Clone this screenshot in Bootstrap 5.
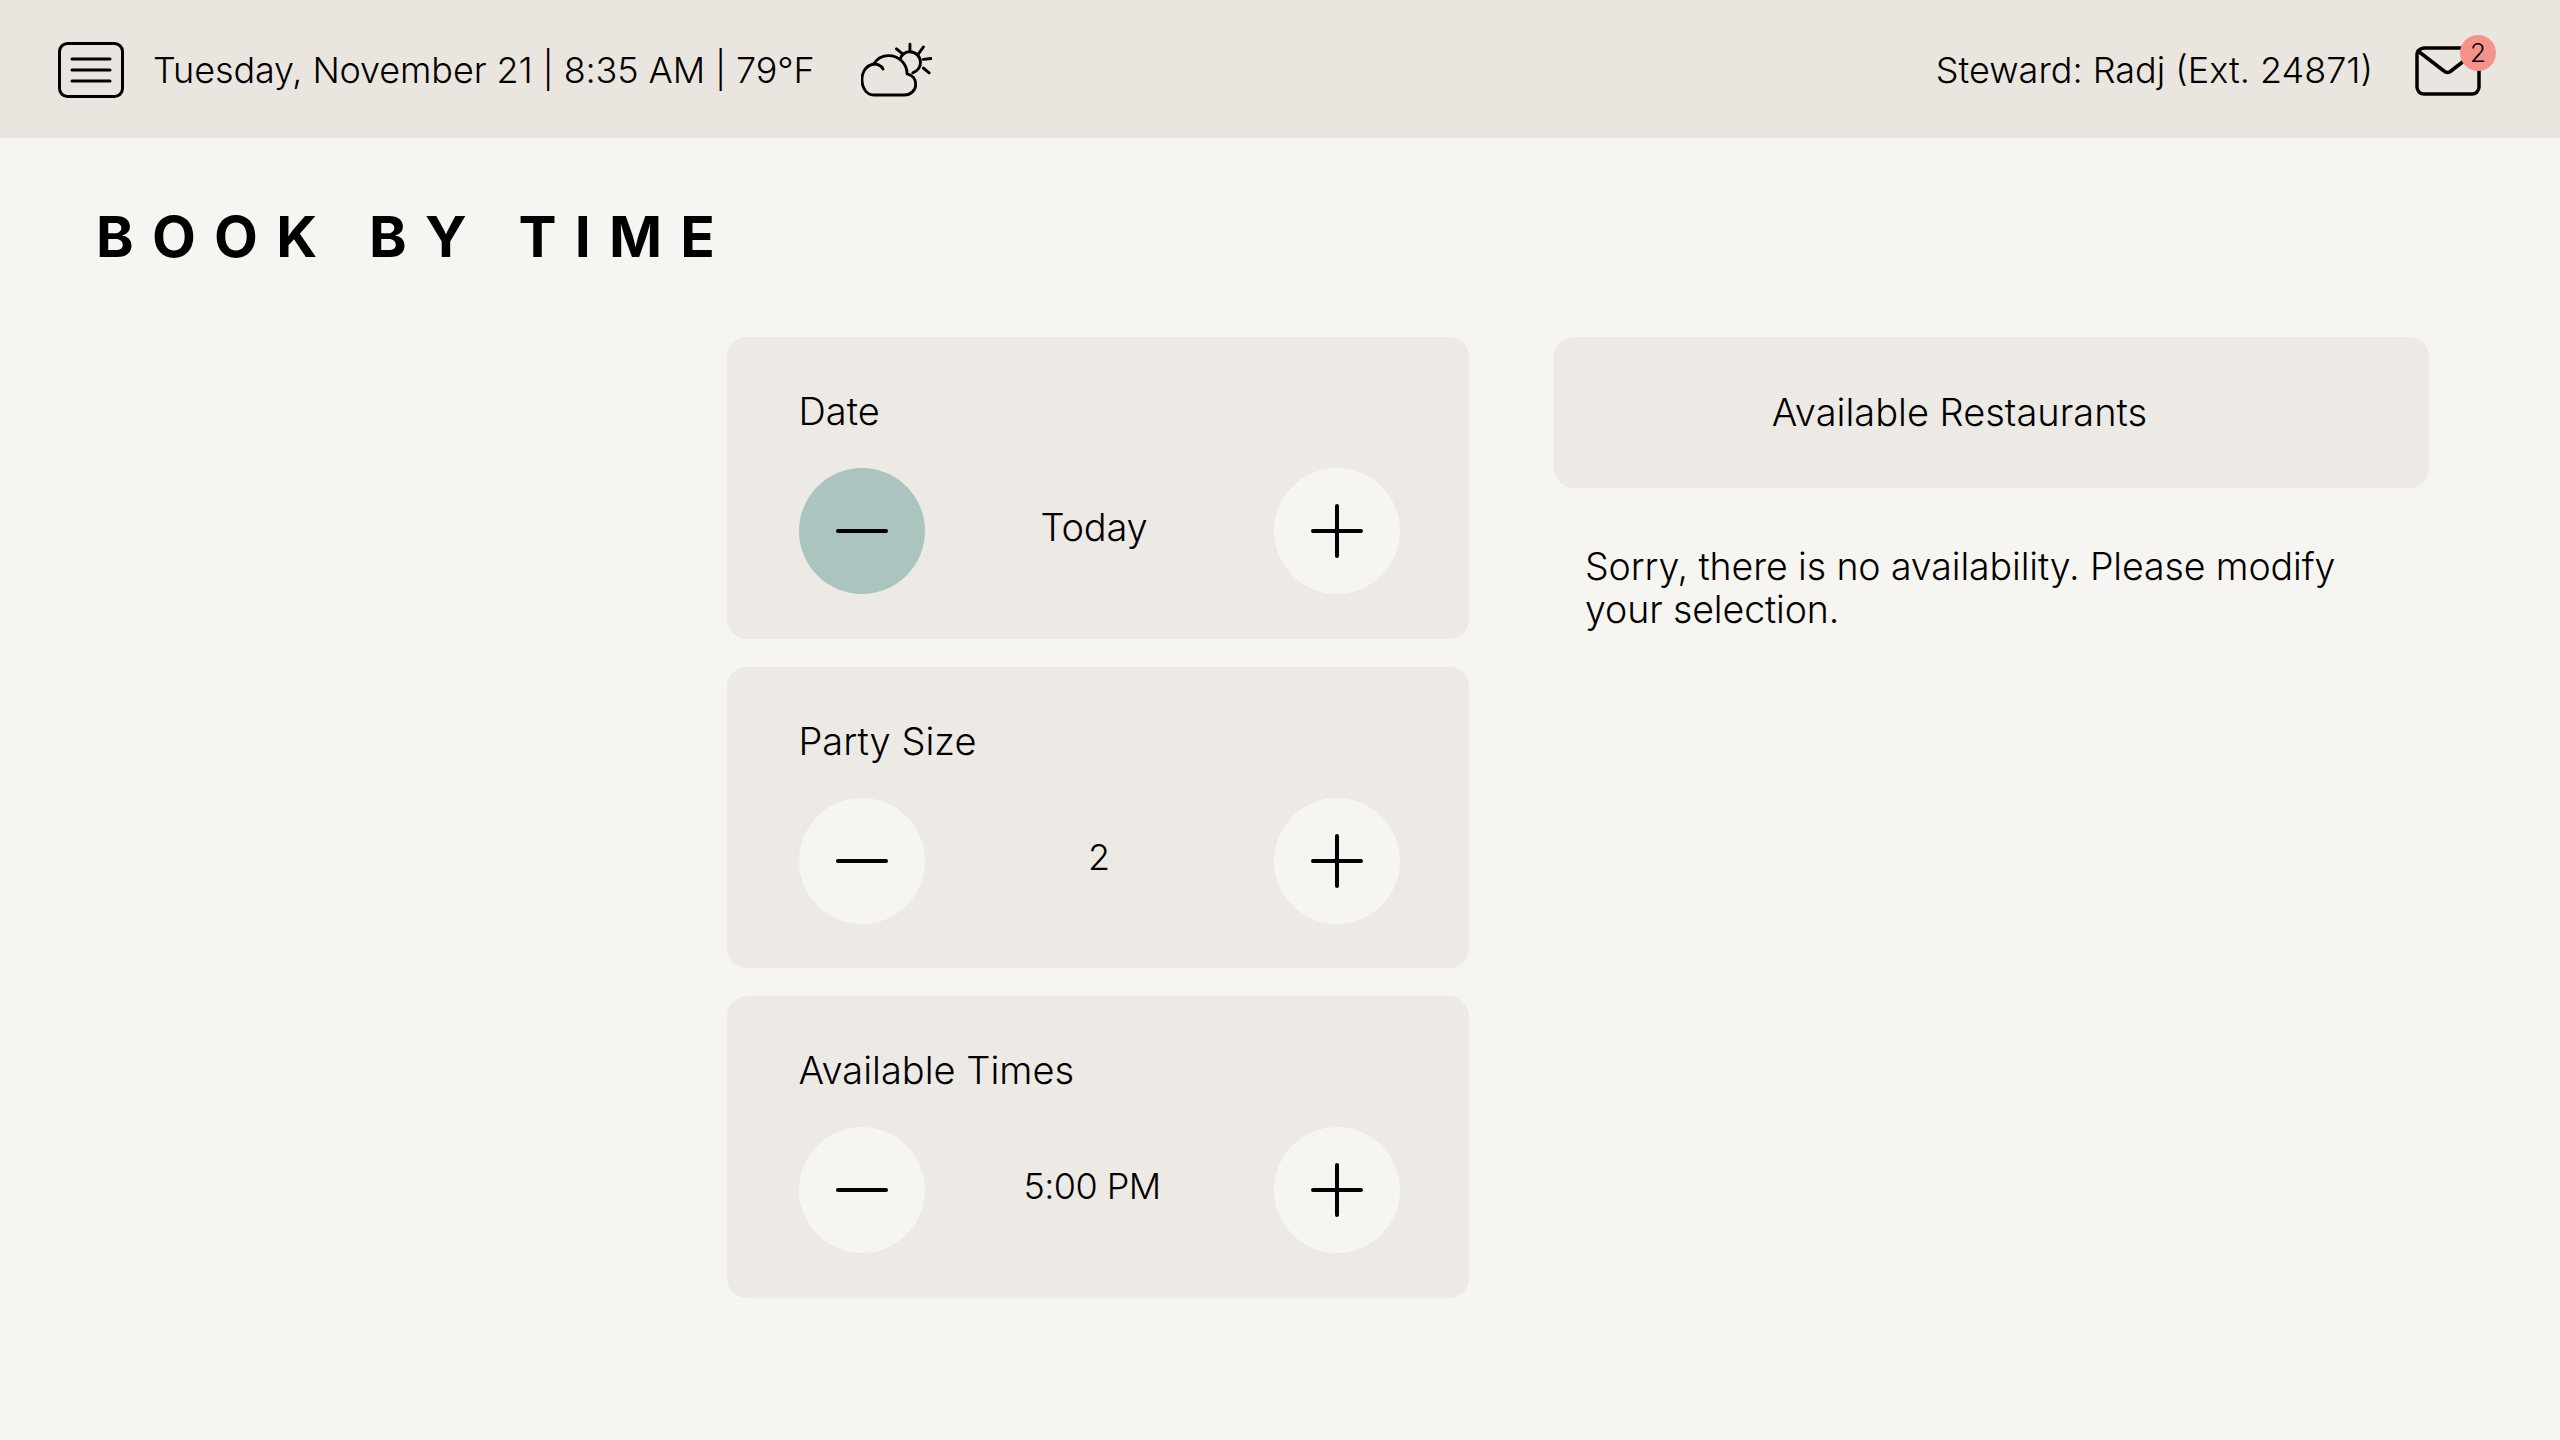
<!DOCTYPE html>
<html lang="en">
<head>
  <meta charset="UTF-8">
  <meta name="viewport" content="width=device-width, initial-scale=1">
  <title>Book By Time</title>
  <link href="https://cdn.jsdelivr.net/npm/bootstrap@5.3.2/dist/css/bootstrap.min.css" rel="stylesheet">
  <style>
    body {
      background: #f6f5f1;
      color: #000;
      font-family: Inter, "Liberation Sans", sans-serif;
      font-size: 36px;
      font-weight: 350;
      min-height: 1440px;
    }
    .top-bar {
      background: #eae6df;
      height: 138px;
      padding: 0 79px 0 58px;
    }
    .top-text { line-height: 1; padding-top: 2px; }
    .menu-icon { width: 66px; height: 56px; margin-top: 2px; }
    .date-text { margin-left: 29px; letter-spacing: -.12px; }
    .weather-icon { width: 71px; height: 56px; margin-left: 46px; margin-top: 2px; }
    .mail-wrap { width: 66px; height: 50px; margin-left: 42px; margin-top: 4px; }
    .mail-icon { width: 66px; height: 50px; display: block; }
    .mail-count {
      position: absolute;
      top: -11px;
      right: -15px;
      width: 36px;
      height: 36px;
      border-radius: 50%;
      background: #f6928c;
      font-size: 26px;
      line-height: 36px;
      text-align: center;
    }
    .page-title {
      font-size: 57px;
      font-weight: 700;
      letter-spacing: 18.2px;
      word-spacing: 2px;
      line-height: 1;
      margin: 0;
      padding: 70px 0 0 96px;
      height: 199px;
    }
    .booking-area { padding-left: 727px; gap: 85px; }
    .steppers { width: 742px; gap: 28px; }
    .stepper-box, .results-head {
      background: #edeae5;
      border-radius: 20px;
    }
    .stepper-box { height: 301.5px; padding: 52px 69.5px 0 71.5px; }
    .stepper-label { font-size: 38px; line-height: 44px; margin-bottom: 35px; }
    .round-btn {
      width: 126px;
      height: 126px;
      padding: 0;
      border: 0;
      border-radius: 50%;
      background: #f6f5f1;
      flex-shrink: 0;
    }
    .round-btn.is-active { background: #abc4bf; }
    .round-btn svg { width: 56px; height: 56px; display: block; margin: auto; }
    .stepper-value { padding-bottom: 8px; line-height: 1; }
    .value-today { font-size: 38px; padding-right: 10px; letter-spacing: -.2px; }
    .value-time { padding-right: 14px; letter-spacing: -.6px; }
    .results { width: 875px; }
    .results-head {
      font-size: 38px;
      height: 151px;
      padding-right: 64px;
    }
    .results-msg {
      font-size: 37.5px;
      line-height: 43px;
      padding: 57px 40px 0 31px;
      letter-spacing: -.1px;
    }
  </style>
</head>
<body>

<header class="top-bar d-flex align-items-center">
  <svg class="menu-icon flex-shrink-0" viewBox="0 0 66 56" fill="none" stroke="#000" stroke-width="3" stroke-linecap="round">
    <rect x="1.5" y="1.5" width="63" height="53" rx="8"/>
    <path d="M14 17h38M14 28h38M14 39h38"/>
  </svg>
  <div class="top-text date-text">Tuesday, November 21 | 8:35 AM | 79°F</div>
  <svg class="weather-icon flex-shrink-0" viewBox="0 0 74 56" fill="none" stroke="#000" stroke-width="3" stroke-linecap="round" stroke-linejoin="round">
    <path d="M13 54h32c7 0 12-5 12-11 0-6-4-10-9-11 0-11-9-19-19-19-7 0-13 4-16 9C6 23 1 29 1 38c0 9 5 16 12 16z"/>
    <path d="M12 22c4-1 9 1 11 5"/>
    <path d="M41 16c2-5 6-7 10-7 6 0 11 5 11 11 0 5-3 9-8 11"/>
    <path d="M51 1v8M37 6l6 5M65 4l-5 7M73 16l-8 1M71 31l-6-5"/>
  </svg>
  <div class="top-text ms-auto">Steward: Radj (Ext. 24871)</div>
  <div class="mail-wrap position-relative flex-shrink-0">
    <svg class="mail-icon" viewBox="0 0 66 50" fill="none" stroke="#000" stroke-width="3.5" stroke-linecap="round" stroke-linejoin="round">
      <rect x="2" y="2" width="62" height="46" rx="7"/>
      <path d="M3 5l26 20c2 2 5 2 7 0l27-21"/>
    </svg>
    <span class="mail-count">2</span>
  </div>
</header>

<h1 class="page-title">BOOK BY TIME</h1>

<main class="booking-area d-flex align-items-start">
  <section class="steppers d-flex flex-column">

    <div class="stepper-box">
      <div class="stepper-label">Date</div>
      <div class="d-flex align-items-center">
        <button type="button" class="round-btn is-active" aria-label="Previous date">
          <svg viewBox="0 0 56 56" fill="none" stroke="#000" stroke-width="4" stroke-linecap="round"><path d="M4 28h48"/></svg>
        </button>
        <div class="stepper-value value-today flex-grow-1 text-center">Today</div>
        <button type="button" class="round-btn" aria-label="Next date">
          <svg viewBox="0 0 56 56" fill="none" stroke="#000" stroke-width="4" stroke-linecap="round"><path d="M4 28h48M28 3v50"/></svg>
        </button>
      </div>
    </div>

    <div class="stepper-box">
      <div class="stepper-label">Party Size</div>
      <div class="d-flex align-items-center">
        <button type="button" class="round-btn" aria-label="Fewer guests">
          <svg viewBox="0 0 56 56" fill="none" stroke="#000" stroke-width="4" stroke-linecap="round"><path d="M4 28h48"/></svg>
        </button>
        <div class="stepper-value flex-grow-1 text-center">2</div>
        <button type="button" class="round-btn" aria-label="More guests">
          <svg viewBox="0 0 56 56" fill="none" stroke="#000" stroke-width="4" stroke-linecap="round"><path d="M4 28h48M28 3v50"/></svg>
        </button>
      </div>
    </div>

    <div class="stepper-box">
      <div class="stepper-label">Available Times</div>
      <div class="d-flex align-items-center">
        <button type="button" class="round-btn" aria-label="Earlier time">
          <svg viewBox="0 0 56 56" fill="none" stroke="#000" stroke-width="4" stroke-linecap="round"><path d="M4 28h48"/></svg>
        </button>
        <div class="stepper-value value-time flex-grow-1 text-center">5:00 PM</div>
        <button type="button" class="round-btn" aria-label="Later time">
          <svg viewBox="0 0 56 56" fill="none" stroke="#000" stroke-width="4" stroke-linecap="round"><path d="M4 28h48M28 3v50"/></svg>
        </button>
      </div>
    </div>

  </section>

  <section class="results">
    <div class="results-head d-flex align-items-center justify-content-center">Available Restaurants</div>
    <p class="results-msg mb-0">Sorry, there is no availability. Please modify your selection.</p>
  </section>
</main>

<script src="https://cdn.jsdelivr.net/npm/bootstrap@5.3.2/dist/js/bootstrap.bundle.min.js"></script>
</body>
</html>
